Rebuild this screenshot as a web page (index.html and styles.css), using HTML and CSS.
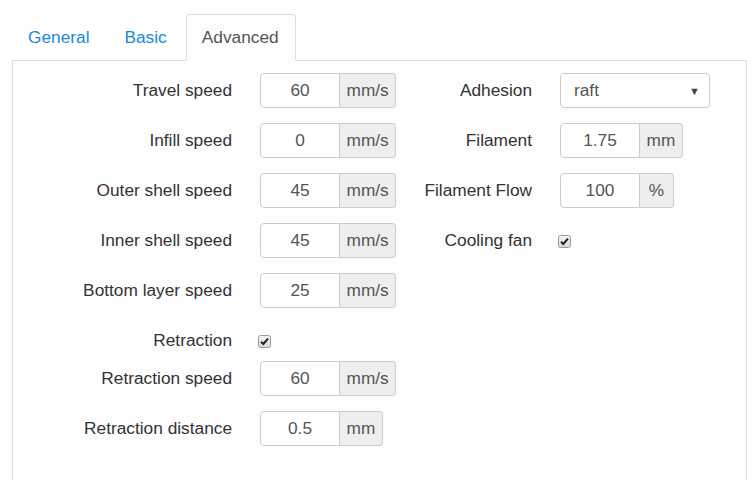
FILE: index.html
```html
<!DOCTYPE html>
<html>
<head>
<meta charset="utf-8">
<link rel="stylesheet" href="styles.css">
</head>
<body>
<div class="page">
  <ul class="tabs">
    <li><a class="tab">General</a></li>
    <li><a class="tab">Basic</a></li>
    <li><a class="tab active">Advanced</a></li>
  </ul>
  <div class="panel">
    <div class="col col-left">
      <div class="row"><label>Travel speed</label><div class="group"><span class="input">60</span><span class="addon">mm/s</span></div></div>
      <div class="row"><label>Infill speed</label><div class="group"><span class="input">0</span><span class="addon">mm/s</span></div></div>
      <div class="row"><label>Outer shell speed</label><div class="group"><span class="input">45</span><span class="addon">mm/s</span></div></div>
      <div class="row"><label>Inner shell speed</label><div class="group"><span class="input">45</span><span class="addon">mm/s</span></div></div>
      <div class="row"><label>Bottom layer speed</label><div class="group"><span class="input">25</span><span class="addon">mm/s</span></div></div>
      <div class="row row-check"><label>Retraction</label><div class="check"><svg width="13" height="13" viewBox="0 0 13 13"><defs><linearGradient id="g1" x1="0" y1="0" x2="0" y2="1"><stop offset="0" stop-color="#f4f4f4"/><stop offset="1" stop-color="#d8d8d8"/></linearGradient></defs><rect x="0.5" y="0.5" width="12" height="12" rx="2" fill="url(#g1)" stroke="#9a9a9a"/><path d="M3 6.8 L5.3 9 L10 3.6" fill="none" stroke="#222" stroke-width="2"/></svg></div></div>
      <div class="row"><label>Retraction speed</label><div class="group"><span class="input">60</span><span class="addon">mm/s</span></div></div>
      <div class="row"><label>Retraction distance</label><div class="group"><span class="input">0.5</span><span class="addon">mm</span></div></div>
    </div>
    <div class="col col-right">
      <div class="row"><label>Adhesion</label><div class="select"><span>raft</span><span class="arrow">▼</span></div></div>
      <div class="row"><label>Filament</label><div class="group"><span class="input">1.75</span><span class="addon">mm</span></div></div>
      <div class="row"><label>Filament Flow</label><div class="group"><span class="input">100</span><span class="addon pct">%</span></div></div>
      <div class="row"><label>Cooling fan</label><div class="check"><svg width="13" height="13" viewBox="0 0 13 13"><defs><linearGradient id="g2" x1="0" y1="0" x2="0" y2="1"><stop offset="0" stop-color="#f4f4f4"/><stop offset="1" stop-color="#d8d8d8"/></linearGradient></defs><rect x="0.5" y="0.5" width="12" height="12" rx="2" fill="url(#g2)" stroke="#9a9a9a"/><path d="M3 6.8 L5.3 9 L10 3.6" fill="none" stroke="#222" stroke-width="2"/></svg></div></div>
    </div>
  </div>
</div>
</body>
</html>
```
FILE: styles.css
```css
* { box-sizing: border-box; }
html, body { margin: 0; padding: 0; background: #fff; }
body {
  font-family: "Liberation Sans", Arial, sans-serif;
  font-size: 17.3px;
  color: #333;
}
.page { padding: 14px 6px 0 12px; }
.tabs {
  list-style: none;
  margin: 0 0 -1px 0;
  padding: 0;
  display: flex;
  position: relative;
  z-index: 1;
}
.tab {
  display: block;
  padding: 10px 16px 10px 15px;
  line-height: 25px;
  margin-right: 2px;
  border: 1px solid transparent;
  border-radius: 4px 4px 0 0;
  color: #2188d2;
}
.tab.active {
  color: #555;
  background: #fdfdfd;
  border-color: #ddd #ddd #fdfdfd;
}
.panel {
  border: 1px solid #ddd;
  background: #fdfdfd;
  height: 440px;
  padding-top: 12px;
  display: flex;
}
.col-left { width: 387px; }
.col-left .row { grid-template-columns: 219px auto; }
.col-right { flex: 1; }
.col-right .row { grid-template-columns: 132px auto; }
.row {
  display: grid;
  column-gap: 28px;
  align-items: center;
  height: 35px;
  margin-bottom: 15px;
}
.row-check { margin-bottom: 3px; }
.row label { text-align: right; white-space: nowrap; }
.group { display: flex; height: 35px; }
.input {
  width: 80px;
  height: 35px;
  border: 1px solid #ccc;
  border-radius: 4px 0 0 4px;
  background: #fff;
  color: #555;
  display: flex;
  align-items: center;
  justify-content: center;
}
.addon {
  height: 35px;
  border: 1px solid #ccc;
  border-left: none;
  border-radius: 0 4px 4px 0;
  background: #eee;
  color: #555;
  padding: 0 6.5px;
  min-width: 34px;
  display: flex;
  align-items: center;
  justify-content: center;
}
.select {
  width: 150px;
  height: 35px;
  border: 1px solid #ccc;
  border-radius: 4px;
  background: #fff;
  color: #555;
  padding: 0 9px 0 13px;
  display: flex;
  align-items: center;
  justify-content: space-between;
}
.arrow { font-size: 11px; color: #444; }
.check { display: flex; align-items: center; margin-left: -2px; height: 35px; }
.check svg { display: block; margin-top: 1px; }
```
